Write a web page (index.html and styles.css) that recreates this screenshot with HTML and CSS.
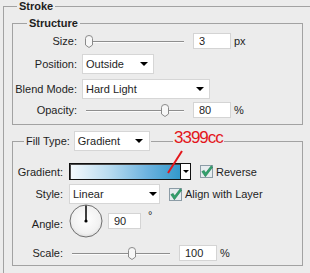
FILE: index.html
```html
<!DOCTYPE html>
<html lang="en">
<head>
    <meta charset="UTF-8">
    <title>Stroke</title>
    <link rel="stylesheet" href="styles.css">
</head>
<body>
    <fieldset class="group group-stroke">
        <legend class="group-title">Stroke</legend>

        <fieldset class="group group-structure">
            <legend class="group-title">Structure</legend>

            <div class="row row-slim">
                <span class="label">Size:</span>
                <div class="slider slider-wide">
                    <svg class="thumb" style="left:3px" width="8" height="13" viewBox="0 0 8 13"><path d="M0.5 3.5 Q0.5 0.5 4 0.5 Q7.5 0.5 7.5 3.5 L7.5 10 L4 12.5 L0.5 10 Z" fill="#f7f7f7" stroke="#8a8a8a"/></svg>
                </div>
                <input class="num" value="3">
                <span class="unit">px</span>
            </div>

            <div class="row row-select gap5">
                <span class="label">Position:</span>
                <div class="select select-position"><span>Outside</span><i class="caret"></i></div>
            </div>

            <div class="row row-select gap5">
                <span class="label">Blend Mode:</span>
                <div class="select select-blend"><span>Hard Light</span><i class="caret"></i></div>
            </div>

            <div class="row row-slim gap3">
                <span class="label">Opacity:</span>
                <div class="slider slider-wide">
                    <svg class="thumb" style="left:79px" width="8" height="13" viewBox="0 0 8 13"><path d="M0.5 3.5 Q0.5 0.5 4 0.5 Q7.5 0.5 7.5 3.5 L7.5 10 L4 12.5 L0.5 10 Z" fill="#f7f7f7" stroke="#8a8a8a"/></svg>
                </div>
                <input class="num" value="80">
                <span class="unit">%</span>
            </div>
        </fieldset>

        <fieldset class="group group-fill">
            <legend class="fill-legend">
                <span>Fill Type:</span>
                <div class="select select-fill"><span>Gradient</span><i class="caret"></i></div>
            </legend>

            <div class="row row-gradient">
                <span class="label">Gradient:</span>
                <div class="gradient-pick">
                    <span class="gradient-bar"></span>
                    <span class="gradient-drop"><i class="caret caret-sm"></i></span>
                </div>
                <label class="check">
                    <svg width="13" height="13" viewBox="0 0 13 13"><rect x="0.5" y="0.5" width="12" height="12" fill="#e6ecef" stroke="#8c9ca6"/><path d="M1.8 6.6 L4.2 5.4 L5.6 8 L11.2 0.8 L12.6 2.2 L5.4 11.8 Z" fill="#32a16c" stroke="#1f7f52" stroke-width="0.6"/></svg>
                    Reverse
                </label>
            </div>

            <div class="row row-select gap4">
                <span class="label">Style:</span>
                <div class="select select-style"><span>Linear</span><i class="caret"></i></div>
                <label class="check">
                    <svg width="13" height="13" viewBox="0 0 13 13"><rect x="0.5" y="0.5" width="12" height="12" fill="#e6ecef" stroke="#8c9ca6"/><path d="M1.8 6.6 L4.2 5.4 L5.6 8 L11.2 0.8 L12.6 2.2 L5.4 11.8 Z" fill="#32a16c" stroke="#1f7f52" stroke-width="0.6"/></svg>
                    Align with Layer
                </label>
            </div>

            <div class="row row-angle">
                <span class="label label-low">Angle:</span>
                <svg class="dial" width="34" height="34" viewBox="0 0 34 34">
                    <defs>
                        <radialGradient id="dialFill" cx="50%" cy="45%" r="55%">
                            <stop offset="0" stop-color="#ffffff"/>
                            <stop offset="0.8" stop-color="#f1f1f1"/>
                            <stop offset="1" stop-color="#dcdcdc"/>
                        </radialGradient>
                    </defs>
                    <circle cx="17" cy="17" r="16" fill="url(#dialFill)" stroke="#6f6f6f"/>
                    <line x1="17" y1="17" x2="17" y2="1.5" stroke="#000" stroke-width="1.5"/>
                    <circle cx="17" cy="17" r="1.6" fill="#000"/>
                </svg>
                <input class="num num-angle label-low" value="90">
                <span class="unit unit-deg">°</span>
            </div>

            <div class="row row-slim gap7">
                <span class="label">Scale:</span>
                <div class="slider slider-scale">
                    <svg class="thumb" style="left:59px" width="8" height="13" viewBox="0 0 8 13"><path d="M0.5 3.5 Q0.5 0.5 4 0.5 Q7.5 0.5 7.5 3.5 L7.5 10 L4 12.5 L0.5 10 Z" fill="#f7f7f7" stroke="#8a8a8a"/></svg>
                </div>
                <input class="num" value="100">
                <span class="unit">%</span>
            </div>
        </fieldset>
    </fieldset>

    <!-- colour note drawn over the dialog -->
    <span class="note">3399cc</span>
    <svg class="note-line" width="20" height="26" viewBox="0 0 20 26"><line x1="2" y1="24" x2="16" y2="2" stroke="#e3161b" stroke-width="2"/></svg>
</body>
</html>
```

FILE: styles.css
```css
html, body {
    margin: 0;
    overflow: hidden;
}
body {
    position: relative;
    width: 310px;
    height: 273px;
    background: #ececec;
    font-family: "Liberation Sans", Arial, sans-serif;
    font-size: 11px;
    color: #1e1e1e;
}
.group {
    box-sizing: border-box;
    margin: 0;
    padding: 0;
    min-width: 0;
    border: 1px solid #a2a2a2;
}
.group-title {
    padding: 0 2px;
    line-height: 13px;
    font-weight: bold;
}
.group-stroke {
    margin-left: 3px;
    width: 330px;
    padding-bottom: 30px;
}
.group-stroke > .group-title {
    margin-left: 13px;
}
.group-structure {
    margin: 4px 0 0 8px;
    width: 291px;
    padding: 3px 0 6px;
}
.group-structure > .group-title {
    margin-left: 14px;
}
.group-fill {
    margin: 6px 0 0 8px;
    width: 291px;
    padding: 12px 0 4px;
}
.fill-legend {
    display: flex;
    align-items: center;
    margin-left: 11px;
    padding: 0 1px 0 2px;
}
.fill-legend > span {
    margin-right: 4px;
}

.row {
    display: flex;
    align-items: center;
}
.row-slim { height: 16px; }
.row-select { height: 20px; }
.gap3 { margin-top: 3px; }
.gap4 { margin-top: 4px; }
.gap5 { margin-top: 5px; }
.gap7 { margin-top: 7px; }

.label {
    flex: none;
    text-align: right;
}
.group-structure .label {
    width: 64px;
    margin-right: 5px;
}
.group-fill .label {
    width: 50px;
    margin-right: 6px;
}
.label-low {
    margin-top: 5px;
}

.slider {
    position: relative;
    flex: none;
    height: 16px;
}
.slider::before {
    content: "";
    position: absolute;
    left: 4px;
    right: 0;
    top: 8px;
    height: 1px;
    background: #8e8e8e;
    border-bottom: 1px solid #fbfbfb;
}
.slider-wide { width: 102px; }
.slider-scale { width: 101px; }
.slider-scale::before { left: 3px; }
.thumb {
    position: absolute;
    top: 2px;
}

.num {
    box-sizing: border-box;
    flex: none;
    width: 38px;
    height: 16px;
    margin: 0 0 0 9px;
    padding: 0 0 0 5px;
    border: 1px solid #d4d4d4;
    background: #fff;
    font: inherit;
    color: inherit;
    outline: none;
}
.num-angle {
    width: 33px;
    margin-left: 5px;
}
.unit {
    margin-left: 3px;
}
.unit-deg {
    margin-left: 7px;
    align-self: flex-start;
    margin-top: 5px;
}

.select {
    box-sizing: border-box;
    flex: none;
    height: 20px;
    display: flex;
    align-items: center;
    justify-content: space-between;
    padding: 0 5px 0 3px;
    background: #fff;
    border: 1px solid #d6d6d6;
    font-weight: normal;
}
.select-position { width: 72px; }
.select-blend { width: 128px; }
.select-fill { width: 76px; padding-right: 6px; }
.select-style { width: 91px; padding-right: 2px; }
.caret {
    width: 0;
    height: 0;
    border-left: 4px solid transparent;
    border-right: 4px solid transparent;
    border-top: 4px solid #000;
}
.caret-sm {
    border-left-width: 3px;
    border-right-width: 3px;
    border-top-width: 3px;
}

.row-gradient { height: 17px; }
.gradient-pick {
    box-sizing: border-box;
    flex: none;
    display: flex;
    width: 122px;
    height: 17px;
    border: 1px solid #111;
}
.gradient-bar {
    flex: 1;
    background: linear-gradient(to right, #f6fafd, #b9dcf0 35%, #6db3df 70%, #3399cc);
    box-shadow: inset 1px 1px 0 #4a4a4a;
}
.gradient-drop {
    width: 9px;
    display: flex;
    align-items: center;
    justify-content: center;
    background: #fff;
    border-left: 1px solid #111;
}
.check {
    display: flex;
    align-items: center;
    margin-left: 9px;
}
.check svg {
    margin-right: 3px;
}

.row-angle {
    height: 34px;
}
.dial {
    flex: none;
}

.note {
    position: absolute;
    left: 173px;
    top: 128px;
    padding: 0 1px;
    font-size: 17px;
    line-height: 20px;
    letter-spacing: -1px;
    color: #e3161b;
    background: #ececec;
}
.note-line {
    position: absolute;
    left: 166px;
    top: 149px;
}
```
